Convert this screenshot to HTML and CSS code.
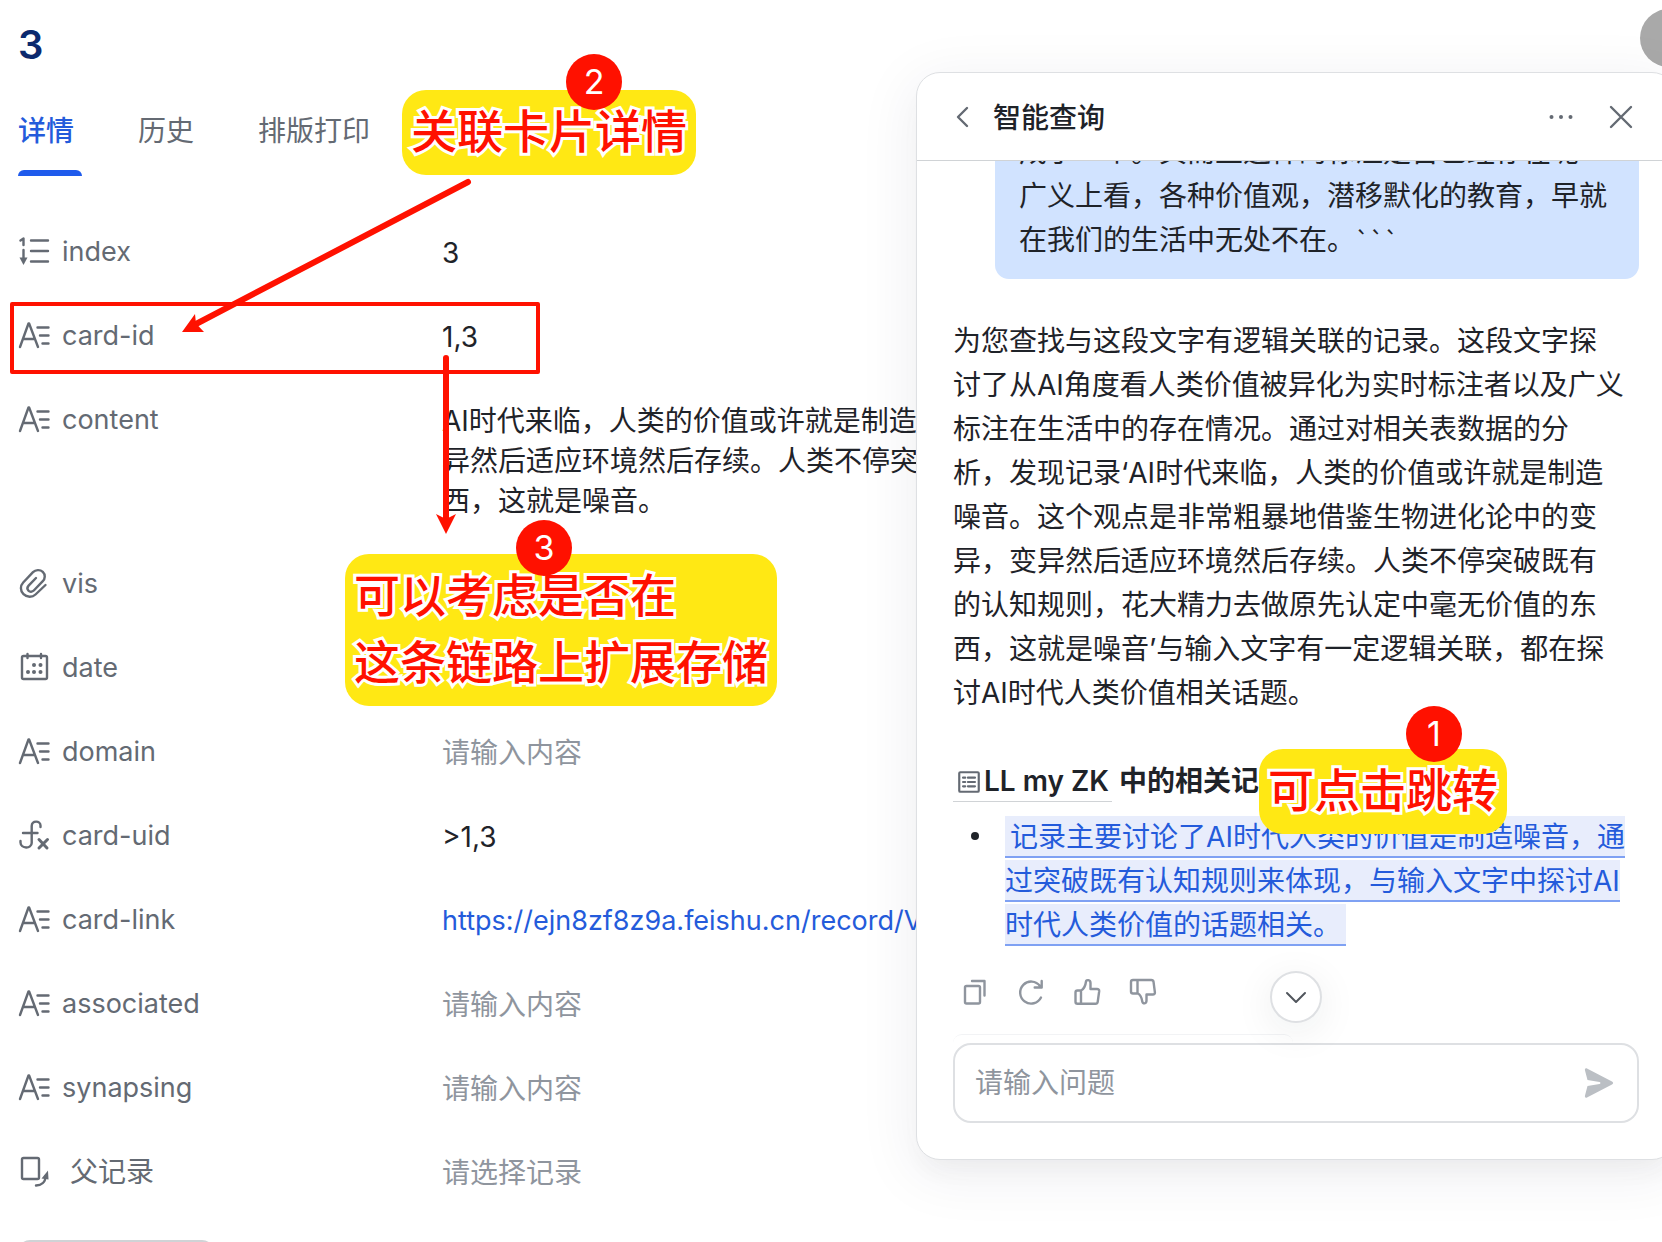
FILE: index.html
```html
<!DOCTYPE html>
<html lang="zh-CN">
<head>
<meta charset="utf-8">
<title>3 - 记录详情</title>
<link rel="stylesheet" href="styles.css">
</head>
<body>
<svg class="sprite" aria-hidden="true">
  <symbol id="i-text" viewBox="0 0 32 32"><path d="M2 28 10.500 4.500h.6L20 28M5 20h12M19.500 8.500h11M22 16.500h8.500M24.500 24.500h6"/></symbol>
  <symbol id="i-auto" viewBox="0 0 32 32"><path d="M2.500 5.500 5.500 3.500v6.500M5.500 15v10M13 5.500h17M13 16h17M13 26.500h17"/><path class="solid" d="M1.500 22.500h8L5.500 30z"/></symbol>
  <symbol id="i-clip" viewBox="0 0 32 32"><path d="M27.500 18 17.500 27.500c-3 2.800-8.500 3.200-12-.3s-3.300-8.500-.3-11.700L15 5.200c2.500-2.500 7-3 9.800-.3s2.400 6.800 0 9.300l-9 9.300c-1.500 1.500-4 1.600-5.300.2s-1.300-3.600.1-5.100l7.400-7.600"/></symbol>
  <symbol id="i-date" viewBox="0 0 32 32"><rect x="4" y="5" width="25" height="23" rx="1.500"/><path d="M9.500 3v4M23 3v4"/><g class="solid"><circle cx="16" cy="14" r="2"/><circle cx="22.500" cy="14" r="2"/><circle cx="10" cy="21" r="2"/><circle cx="16" cy="21" r="2"/><circle cx="22.500" cy="21" r="2"/></g></symbol>
  <symbol id="i-fx" viewBox="0 0 32 32"><path d="M22.500 8V6.500c0-5-8.500-5.500-8.800.5v17c0 6-11.200 6-11.200-.5V22M5 14h14.500"/><path class="thick" d="m21 20.500 8 8.500M29.500 20.500 21 29"/></symbol>
  <symbol id="i-parent" viewBox="0 0 32 32"><rect x="4" y="3" width="17" height="21" rx="1.500"/><path d="M18 30.500c5 0 9.500-3 9.500-9.500"/><path class="solid" d="M23.500 23.500 30 15.500l.5 9z"/></symbol>
</svg>

<div class="app">
  <main class="record">
    <h1 class="record-title">3</h1>
    <nav class="tabs" aria-label="记录视图">
      <a class="tab active" href="#detail">详情</a>
      <a class="tab" href="#history">历史</a>
      <a class="tab" href="#print">排版打印</a>
    </nav>
    <form class="fields">
      <div class="field"><svg class="icon"><use href="#i-auto"/></svg><label for="f-index">index</label><input id="f-index" class="value" value="3" readonly></div>
      <div class="field"><svg class="icon"><use href="#i-text"/></svg><label for="f-id">card-id</label><input id="f-id" class="value" value="1,3"></div>
      <div class="field"><svg class="icon"><use href="#i-text"/></svg><span class="name">content</span><div class="value">AI时代来临，人类的价值或许就是制造噪音。这个观点是非常粗暴地借鉴生物进化论中的变异，变异然后适应环境然后存续。人类不停突破既有的认知规则，花大精力去做原先认定中毫无价值的东西，这就是噪音。</div></div>
      <div class="field"><svg class="icon"><use href="#i-clip"/></svg><span class="name">vis</span></div>
      <div class="field"><svg class="icon"><use href="#i-date"/></svg><label for="f-date">date</label><input id="f-date" class="value"></div>
      <div class="field"><svg class="icon"><use href="#i-text"/></svg><label for="f-domain">domain</label><input id="f-domain" class="value" placeholder="请输入内容"></div>
      <div class="field"><svg class="icon"><use href="#i-fx"/></svg><label for="f-uid">card-uid</label><input id="f-uid" class="value" value="&gt;1,3" readonly></div>
      <div class="field"><svg class="icon"><use href="#i-text"/></svg><span class="name">card-link</span><a class="value link" href="#record">https://ejn8zf8z9a.feishu.cn/record/V</a></div>
      <div class="field"><svg class="icon"><use href="#i-text"/></svg><label for="f-assoc">associated</label><input id="f-assoc" class="value" placeholder="请输入内容"></div>
      <div class="field"><svg class="icon"><use href="#i-text"/></svg><label for="f-syn">synapsing</label><input id="f-syn" class="value" placeholder="请输入内容"></div>
      <div class="field parent"><svg class="icon"><use href="#i-parent"/></svg><span class="name">父记录</span><button type="button" class="value pick">请选择记录</button></div>
      <button type="button" class="add-field" aria-label="新增字段"></button>
    </form>
  </main>

  <span class="avatar"></span>

  <aside class="panel">
    <header class="panel-head">
      <button class="icon-btn" aria-label="返回"><svg viewBox="0 0 28 28"><path d="M18 5 9 14l9 9"/></svg></button>
      <h2>智能查询</h2>
      <button class="icon-btn" aria-label="更多"><svg viewBox="0 0 28 28"><g class="solid"><circle cx="4.500" cy="14" r="2"/><circle cx="14" cy="14" r="2"/><circle cx="23.500" cy="14" r="2"/></g></svg></button>
      <button class="icon-btn" aria-label="关闭"><svg viewBox="0 0 28 28"><path d="m4 4 20 20M24 4 4 24"/></svg></button>
    </header>
    <div class="chat">
      <p class="question">成了一个。其而且这样的标注是否已经存在呢<br>广义上看，各种价值观，潜移默化的教育，早就在我们的生活中无处不在。<span class="ticks">```</span></p>
      <p class="answer">为您查找与这段文字有逻辑关联的记录。这段文字探<br>讨了从AI角度看人类价值被异化为实时标注者以及广义<br>标注在生活中的存在情况。通过对相关表数据的分<br>析，发现记录‘AI时代来临，人类的价值或许就是制造<br>噪音。这个观点是非常粗暴地借鉴生物进化论中的变<br>异，变异然后适应环境然后存续。人类不停突破既有<br>的认知规则，花大精力去做原先认定中毫无价值的东<br>西，这就是噪音’与输入文字有一定逻辑关联，都在探<br>讨AI时代人类价值相关话题。</p>
      <h3 class="source"><a href="#table"><svg viewBox="0 0 24 24"><rect x="3" y="3" width="18" height="18" rx="1"/><path d="M6.500 8h2M11 8h6.500M6.500 12h2M11 12h6.500M6.500 16h2M11 16h6.500"/></svg>LL my ZK</a> 中的相关记录</h3>
      <ul class="results">
        <li><a href="#record">&thinsp;记录主要讨论了AI时代人类的价值是制造噪音，通过突破既有认知规则来体现，与输入文字中探讨AI时代人类价值的话题相关。&thinsp;</a></li>
      </ul>
      <div class="actions">
        <button class="icon-btn" aria-label="复制"><svg viewBox="0 0 28 28"><rect x="4" y="8" width="15" height="17.500" rx="1.500"/><path d="M11 3h12.500v14.500"/></svg></button>
        <button class="icon-btn" aria-label="重新生成"><svg viewBox="0 0 28 28"><path d="M24 19.500A11 11 0 1 1 23 8M24.700 3v6.500h-7"/></svg></button>
        <button class="icon-btn" aria-label="赞"><svg viewBox="0 0 28 28"><path d="M8 12.500c3-1.500 4.500-5 5-9 .3-2 4.500-2 4.500 1.500v6h6.500c1.500 0 2.300 1 2.200 2.200l-1.500 10.600c-.2 1.300-1 2-2.200 2H4.500c-1.200 0-2-.8-2-2v-9.300c0-1.200.8-2 2-2zM8 12.500v13.300"/></svg></button>
        <button class="icon-btn" aria-label="踩"><svg viewBox="0 0 28 28"><path d="M9 15.500c3 1.500 3.800 5 4.300 8 .4 2.700 4.200 2.500 4.200-1V16.500h6.300c1.500 0 2.300-1 2.100-2.200L24.500 3.700c-.2-1.200-1-1.700-2.200-1.700H4c-1.200 0-2 .8-2 2v9.500c0 1.200.8 2 2 2zM8.500 2v13.300"/></svg></button>
      </div>
      <div class="suggest-edge"></div>
    </div>
    <button class="to-bottom" aria-label="滚动到底部"><svg viewBox="0 0 28 28"><path d="m5 10 9 9 9-9"/></svg></button>
    <form class="ask">
      <input type="text" aria-label="请输入问题" placeholder="请输入问题">
      <button type="button" aria-label="发送"><svg viewBox="0 0 32 32"><path d="M2 3.500c-.5-2 .8-2.600 2-2L29 14.500c1.500.8 1.500 2.200 0 3L4 30.500c-1.200.6-2.500 0-2-2l2.500-9.500 12-2c1.200-.2 1.200-1.800 0-2l-12-2z"/></svg></button>
    </form>
  </aside>

  <div class="frame"></div>
  <svg class="arrows" aria-hidden="true">
    <path class="shaft" d="M468 182 196 324M446 358v160"/>
    <path class="head" d="m182 332 13-18 1 9.500 8 8.500zM446 534l-10-20 10 5 10-5z"/>
  </svg>
  <div class="note note-1">可点击跳转</div>
  <div class="note note-2">关联卡片详情</div>
  <div class="note note-3">可以考虑是否在<br>这条链路上扩展存储</div>
  <span class="badge badge-1">1</span>
  <span class="badge badge-2">2</span>
  <span class="badge badge-3">3</span>
</div>
</body>
</html>
```
FILE: styles.css
```css
*, *::before, *::after { box-sizing: border-box; }

body, h1, h2, h3, p, ul { margin: 0; padding: 0; }

body {
  font: 400 28px/40px Inter, "Noto Sans CJK SC", sans-serif;
  color: #1f2329;
  background: #fff;
}

input, button { font: inherit; color: inherit; background: none; border: 0; margin: 0; padding: 0; }
input { outline: 0; }
button { cursor: pointer; }
a { color: inherit; text-decoration: none; }
::placeholder { color: #8f959e; opacity: 1; }

svg { fill: none; stroke: currentColor; stroke-width: 2.4; stroke-linecap: round; stroke-linejoin: round; }
.solid { fill: currentColor; stroke: none; }
.thick { stroke-width: 3; }
.sprite { position: absolute; width: 0; height: 0; }

.app { position: relative; height: 100vh; overflow: hidden; }

/* record detail */
.record { padding: 21px 12px 0 18px; }
.record-title { font-size: 40px; line-height: 48px; font-weight: 600; color: #0c296e; }

.tabs { display: flex; gap: 64px; margin-top: 42px; color: #646a73; }
.tab { position: relative; height: 65px; }
.tab.active { color: #245bdb; font-weight: 500; }
.tab.active::after {
  content: "";
  position: absolute;
  left: 0;
  bottom: 0;
  width: 64px;
  height: 6px;
  border-radius: 6px 6px 0 0;
  background: #1f5bec;
}

.fields { margin-top: 35px; }
.field { display: flex; align-items: flex-start; padding: 22px 0; color: #646a73; }
.icon { flex: none; width: 32px; height: 32px; margin: 2px 12px 6px 0; }
.field label, .field .name { flex: none; width: 380px; font-size: 27px; line-height: 38px; }
.parent .name { padding-left: 8px; font-size: 28px; }
.value { flex: 1; min-width: 0; color: #1f2329; }
input.value { height: 40px; }
.link { color: #245bdb; font-size: 27px; }
.pick { color: #8f959e; text-align: left; }
.add-field { width: 196px; height: 64px; margin-top: 25px; border: 2px solid #d0d3d6; border-radius: 12px; }

.avatar { position: absolute; top: 9px; right: -36px; width: 58px; height: 58px; border-radius: 50%; background: #a9a9a9; }

/* assistant panel */
.panel {
  position: absolute;
  top: 72px;
  right: -14px;
  bottom: 82px;
  width: 760px;
  display: flex;
  flex-direction: column;
  border: 1px solid #dee0e3;
  border-radius: 24px;
  background: #fff;
  box-shadow: 0 12px 56px 8px rgba(31, 35, 60, .06), 0 16px 24px -8px rgba(31, 35, 60, .05);
}
.panel-head { display: flex; align-items: center; height: 88px; padding: 0 40px 0 32px; border-bottom: 1px solid #d0d3d6; }
.panel-head h2 { flex: 1; margin-left: 16px; padding-top: 2px; font-size: 28px; font-weight: 500; }
.panel-head .icon-btn:last-child { margin-left: 32px; }
.icon-btn { width: 28px; height: 28px; color: #646a73; }
.icon-btn svg { display: block; width: 28px; height: 28px; }

.chat {
  flex: 1;
  min-height: 0;
  display: flex;
  flex-direction: column;
  justify-content: flex-end;
  overflow: hidden;
  padding: 0 36px;
  line-height: 44px;
}
.question { margin-left: 42px; padding: 18px 24px 17px; border-radius: 14px; background: #d1e3ff; }
.ticks { font-family: "Noto Sans CJK SC", sans-serif; font-size: 24px; }
.answer { margin-top: 40px; white-space: nowrap; }
.source { margin-top: 44px; font-size: 28px; font-weight: 600; }
.source a { display: inline-block; height: 43px; padding: 0 3px; border-bottom: 1px solid #d0d3d6; }
.source svg { width: 26px; height: 26px; margin-right: 2px; vertical-align: -4px; color: #646a73; stroke-width: 2; }
.results { margin-top: 12px; padding-left: 52px; list-style: none; }
.results li { position: relative; }
.results li::before {
  content: "";
  position: absolute;
  left: -34px;
  top: 17px;
  width: 8px;
  height: 8px;
  border-radius: 50%;
  background: #1f2329;
}
.results a { padding: 4px 0 2px; border-bottom: 2px solid #7fa1f3; background: #e8edfc; color: #245bdb; }
.actions { display: flex; gap: 28px; padding-left: 8px; margin-top: 31px; }
.actions .icon-btn { color: #8f959e; }
.suggest-edge { flex: none; width: 340px; height: 9px; margin-top: 28px; border-top: 1px solid #f2f3f5; border-radius: 12px 12px 0 0; }

.to-bottom {
  position: absolute;
  left: 50%;
  bottom: 136px;
  width: 52px;
  height: 52px;
  margin-left: -26px;
  display: grid;
  place-items: center;
  border: 2px solid #dee0e3;
  border-radius: 50%;
  background: #fff;
  color: #51565d;
  box-shadow: 0 8px 40px rgba(31, 35, 41, .08);
}
.to-bottom svg { width: 28px; height: 28px; stroke-width: 2; }

.ask { display: flex; align-items: center; height: 80px; margin: 0 36px 36px; padding: 0 22px 0 20px; border: 2px solid #dee0e3; border-radius: 18px; background: #fff; }
.ask input { flex: 1; min-width: 0; }
.ask button { width: 32px; height: 32px; color: #bbbfc4; }
.ask svg { display: block; width: 32px; height: 32px; fill: currentColor; stroke: none; }

/* annotations drawn over the screen */
.frame { position: absolute; left: 10px; top: 302px; width: 530px; height: 72px; border: 4px solid #ff1100; border-radius: 2px; }
.arrows { position: absolute; left: 0; top: 0; width: 560px; height: 560px; color: #ff1100; pointer-events: none; }
.shaft { stroke-width: 6; }
.head { fill: currentColor; stroke: none; }
.note {
  position: absolute;
  padding: 8px 9px 10px;
  border-radius: 24px;
  background: #ffe814;
  color: #ff1100;
  font-size: 46px;
  font-weight: 500;
  line-height: 67px;
  white-space: nowrap;
  -webkit-text-stroke: 6px #fff;
  paint-order: stroke fill;
}
.note-1 { left: 1259px; top: 749px; }
.note-2 { left: 402px; top: 90px; }
.note-3 { left: 345px; top: 554px; }
.badge { position: absolute; width: 56px; height: 56px; border-radius: 50%; background: #ff1100; color: #fff; font-size: 34px; line-height: 56px; text-align: center; }
.badge-1 { left: 1406px; top: 706px; }
.badge-2 { left: 566px; top: 54px; }
.badge-3 { left: 516px; top: 520px; }
```
